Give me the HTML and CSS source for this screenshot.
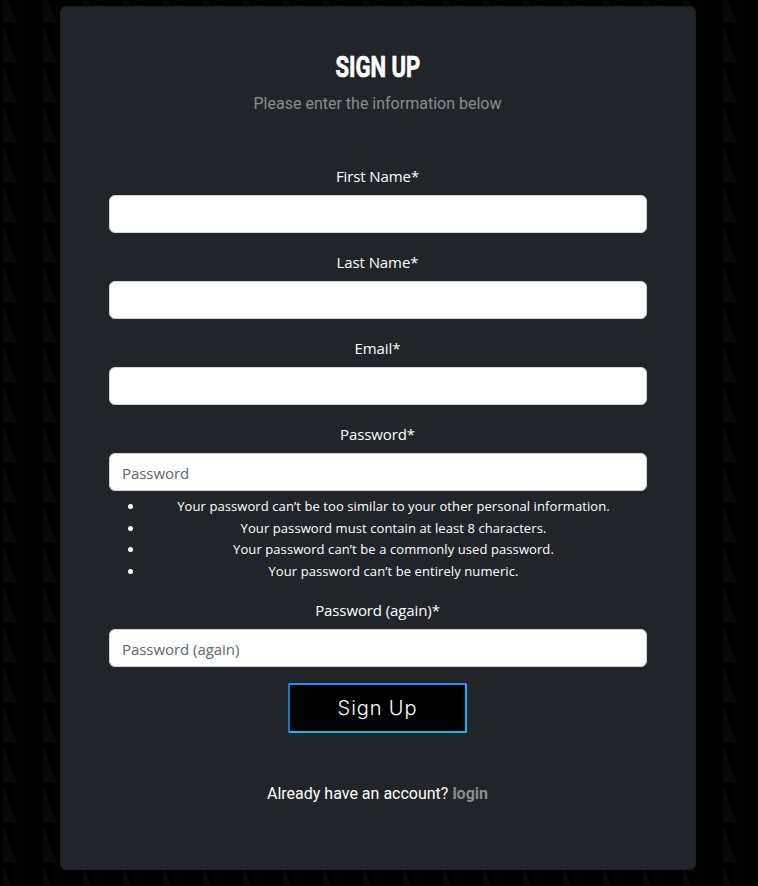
FILE: index.html
```html
<!DOCTYPE html>
<html lang="en">
<head>
<meta charset="utf-8">
<title>Sign Up</title>
<link rel="stylesheet" href="styles.css">
</head>
<body>
<svg class="backdrop" aria-hidden="true">
  <defs>
    <pattern id="weave" y="22" width="40" height="40" patternUnits="userSpaceOnUse">
      <rect x="13" width="10" height="40" fill="#020202"/>
      <path d="M3 4V40H16Z" fill="#080808"/>
    </pattern>
  </defs>
  <rect width="100%" height="100%" fill="url(#weave)"/>
</svg>
<main class="card">
  <h1 class="title"><span class="title-text">SIGN UP</span></h1>
  <p class="subtitle">Please enter the information below</p>
  <form class="form">
    <div class="field">
      <label class="label" for="first">First Name*</label>
      <input class="input" id="first" type="text">
    </div>
    <div class="field">
      <label class="label" for="last">Last Name*</label>
      <input class="input" id="last" type="text">
    </div>
    <div class="field">
      <label class="label" for="email">Email*</label>
      <input class="input" id="email" type="email">
    </div>
    <div class="field">
      <label class="label" for="pw1">Password*</label>
      <input class="input" id="pw1" type="password" placeholder="Password">
      <ul class="hints">
        <li class="hint">Your password can’t be too similar to your other personal information.</li>
        <li class="hint">Your password must contain at least 8 characters.</li>
        <li class="hint">Your password can’t be a commonly used password.</li>
        <li class="hint">Your password can’t be entirely numeric.</li>
      </ul>
    </div>
    <div class="field">
      <label class="label" for="pw2">Password (again)*</label>
      <input class="input" id="pw2" type="password" placeholder="Password (again)">
    </div>
    <button class="button" type="button">Sign Up</button>
  </form>
  <p class="footer">Already have an account? <a class="link" href="#">login</a></p>
</main>
</body>
</html>
```
FILE: styles.css
```css
* { box-sizing: border-box; }

body {
  margin: 0;
  height: 886px;
  overflow: hidden;
  background: #000;
  color: #fff;
  font-family: "Open Sans", "Noto Sans", sans-serif;
}

.backdrop {
  position: absolute;
  inset: 0;
  z-index: -1;
  width: 100%;
  height: 100%;
}

.card {
  width: 636px;
  height: 864px;
  margin: 6px 0 0 60px;
  padding: 40px 49px 0 48px;
  border: 1px solid #1c1f22;
  border-radius: 6px;
  background: #212529;
  text-align: center;
}

.title {
  margin: 0;
  height: 40px;
  font: 700 29px/40px Roboto, sans-serif;
}

.title-text {
  display: inline-block;
  transform: scaleX(.76);
  -webkit-text-stroke: .7px #fff;
}

.subtitle {
  margin: 5px 0 0;
  font: 400 16px/24px Roboto, sans-serif;
  color: #8c8c8c;
}

.form { margin-top: 47px; }

.field { margin-bottom: 16px; }

.label {
  display: block;
  height: 24px;
  margin-bottom: 8px;
  font-size: 15px;
  line-height: 26px;
  letter-spacing: -.1px;
}

.input {
  display: block;
  width: 538px;
  height: 38px;
  padding: 7px 12px 5px;
  border: 1px solid #ced4da;
  border-radius: 6px;
  background: #fff;
  font: 15px/24px "Open Sans", "Noto Sans", sans-serif;
  letter-spacing: -.05px;
}

.input::placeholder {
  color: #5f666d;
  opacity: 1;
}

.hints {
  height: 85px;
  margin: 5px 0 0;
  padding-left: 32px;
  font-size: 13px;
  line-height: 21.6px;
  list-style: none;
}

.hint {
  position: relative;
  letter-spacing: .085px;
}

.hint::before {
  content: "";
  position: absolute;
  top: 8px;
  left: -13px;
  width: 5px;
  height: 5px;
  border-radius: 50%;
  background: #fff;
}

.button {
  width: 179px;
  height: 50px;
  padding: 0;
  border: 2px solid;
  border-color: #1e90ff #00bfff #00bfff #0a7cd6;
  border-radius: 2px;
  background: #000;
  color: #fff;
  font: 300 20px/44px Inter, sans-serif;
  letter-spacing: .9px;
}

.footer {
  margin: 49px 0 0;
  font: 400 16px/24px Roboto, sans-serif;
}

.link {
  color: #8c8c8c;
  font-weight: 700;
  text-decoration: none;
}
```
